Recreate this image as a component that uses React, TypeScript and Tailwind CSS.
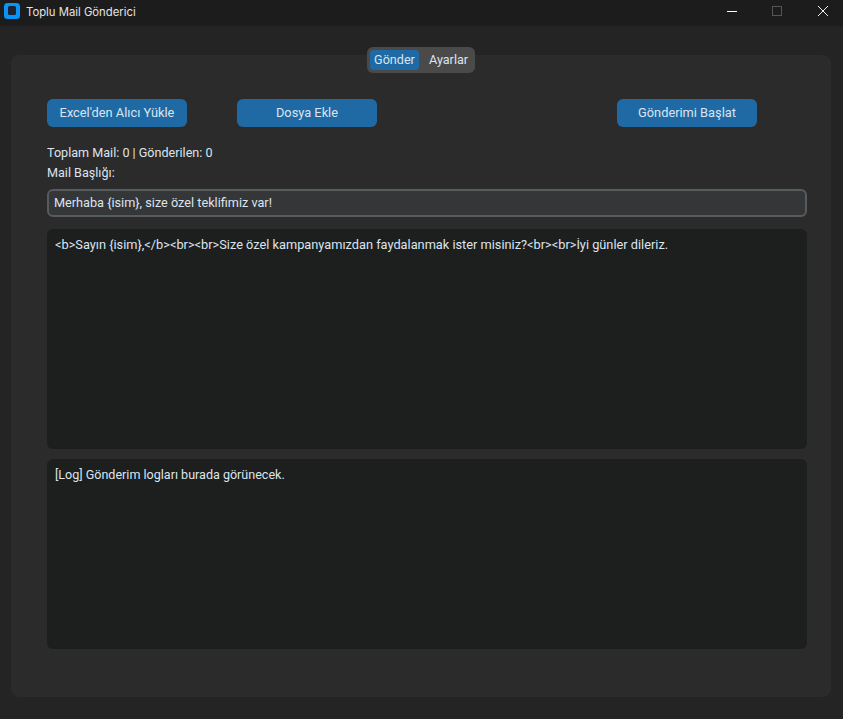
const Button = ({ label, className = "" }: { label: string; className?: string }) => (
  <button className={`h-7 w-[140px] rounded-md bg-[#1f6aa5] text-[12.8px] text-[#dce4ee] ${className}`}>{label}</button>
);

const App = () => {
  return (
    <div className="flex h-[719px] w-[843px] flex-col overflow-hidden bg-[#242424] font-['Roboto',sans-serif] text-[12.6px] text-[#dce4ee]">
      <header className="flex h-[26px] items-center bg-[#1c1c1c] pl-1">
        <svg width="16" height="16" viewBox="0 0 16 16" className="mb-1 shrink-0">
          <rect width="16" height="16" rx="3.5" fill="#0a94f5" />
          <rect x="4" y="3" width="8" height="9" rx="1.5" fill="#1b2430" />
        </svg>
        <span className="mb-[2px] ml-[6px] font-['Inter',sans-serif] text-[11.3px] text-[#e4e4e4]">Toplu Mail Gönderici</span>
        <div className="mb-1 ml-auto flex items-center">
          <div className="mr-[35px] h-px w-[10px] bg-white" />
          <div className="mr-[36px] h-[10px] w-[10px] border border-[#555555]" />
          <svg width="10" height="10" viewBox="0 0 10 10" className="mr-[15px]">
            <path d="M0 0l10 10M10 0L0 10" stroke="#f0f0f0" strokeWidth="1" />
          </svg>
        </div>
      </header>

      <div className="relative z-10 mt-[21px] -mb-[18px] ml-[367px] flex h-[26px] w-[108px] items-center rounded-md bg-[#4a4a4a] px-[3px]">
        <div className="flex h-5 w-[49px] items-center justify-center rounded-[4px] bg-[#1f6aa5]">Gönder</div>
        <div className="ml-[10px]">Ayarlar</div>
      </div>

      <main className="mr-3 ml-[11px] flex h-[642px] flex-col rounded-lg bg-[#2b2b2b] pt-11 pr-6 pl-9">
        <div className="flex">
          <Button label="Excel'den Alıcı Yükle" />
          <Button label="Dosya Ekle" className="ml-[50px]" />
          <Button label="Gönderimi Başlat" className="ml-[240px]" />
        </div>
        <p className="mt-4 leading-5">Toplam Mail: 0 | Gönderilen: 0</p>
        <p className="leading-5">Mail Başlığı:</p>
        <div className="mt-[6px] flex h-7 items-center rounded-md border-2 border-[#565b5e] bg-[#343638] px-[5px] text-[12.7px]">
          Merhaba {"{isim}"}, size özel teklifimiz var!
        </div>
        <div className="mt-3 h-[220px] rounded-md bg-[#1d1e1e] px-2 py-[7px] text-[12.77px] leading-[18px]">
          {"<b>Sayın {isim},</b><br><br>Size özel kampanyamızdan faydalanmak ister misiniz?<br><br>İyi günler dileriz."}
        </div>
        <div className="mt-[10px] h-[190px] rounded-md bg-[#1d1e1e] px-2 py-[7px] text-[12.56px] leading-[18px]">
          [Log] Gönderim logları burada görünecek.
        </div>
      </main>
    </div>
  );
};

export default App;
